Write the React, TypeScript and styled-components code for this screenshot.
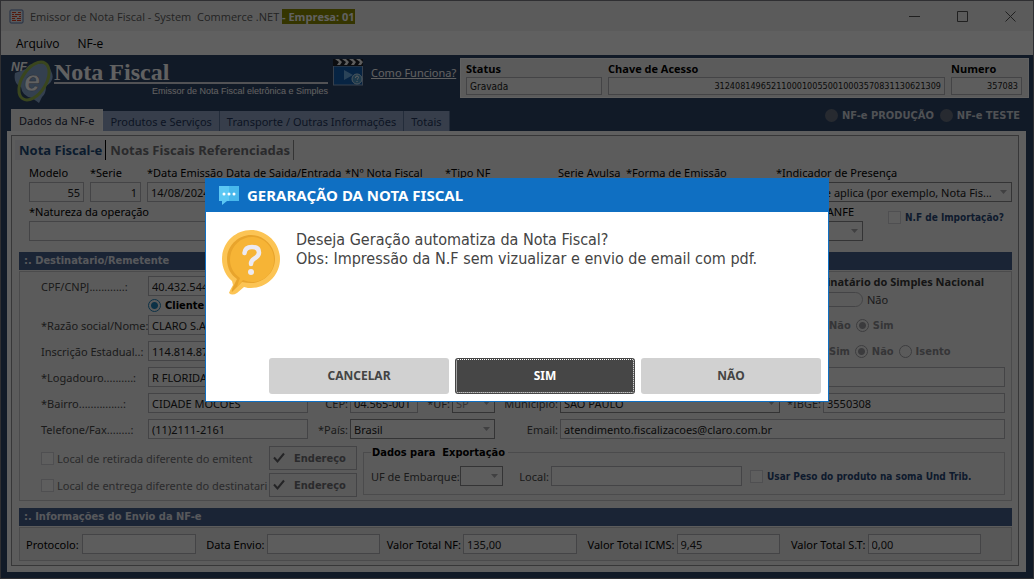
import React, { ReactNode } from "react";
import styled, { createGlobalStyle, css } from "styled-components";

const Global = createGlobalStyle`
  * { box-sizing: border-box; }
  body { margin: 0; background: #f0f0f0; }
  body, button, input, select { font-family: "Noto Sans", sans-serif; font-size: 11px; }
`;

const navy = "#2f4468";
const bar = "#445f8c";
const line = "#b4b4b8";
const heavy = `"DejaVu Sans Condensed", "Noto Sans", sans-serif`;

const Window = styled.div`
  min-height: 100vh;
  display: flex;
  flex-direction: column;
  border: 1px solid #7c7c84;
  background: #f0f0f0;
  color: #000;
`;

const TitleBar = styled.header`
  height: 30px;
  display: flex;
  align-items: center;
  gap: 6px;
  padding: 0 16px 0 8px;
  font-family: "Open Sans", "Noto Sans", sans-serif;
  color: #5c5c5c;
`;
const TitleText = styled.h1`
  margin: 0;
  flex: 1;
  font-size: 11px;
  font-weight: 400;
  white-space: pre;
`;
const Company = styled.mark`
  background: #8c8c00;
  color: #fff;
  font-weight: 700;
`;
const WindowButton = styled.button`
  width: 14px;
  height: 14px;
  padding: 0;
  border: 0;
  background: none;
  margin-left: 28px;
  display: grid;
  place-items: center;
`;

const MenuBar = styled.nav`
  height: 24px;
  display: flex;
  align-items: center;
  gap: 18px;
  padding-left: 15px;
  background: #fcfcfc;
`;
const MenuItem = styled.button`
  border: 0;
  padding: 0;
  background: none;
  font-family: "Open Sans", "Noto Sans", sans-serif;
  font-size: 12px;
`;

const Shell = styled.main`
  flex: 1;
  display: flex;
  flex-direction: column;
  background: ${navy};
  padding: 3px 7px 6px 6px;
`;
const Banner = styled.div`
  display: flex;
  align-items: flex-start;
  height: 51px;
  margin-right: -3px;
  padding-left: 4px;
`;
const Brand = styled.div`
  width: 274px;
  margin-right: 5px;
  color: #fff;
  display: flex;
  flex-direction: column;
`;
const BrandName = styled.div`
  font: bold 24px/28px "Liberation Serif", serif;
  border-bottom: 2px solid #d8d8e0;
  height: 26px;
`;
const BrandSub = styled.div`
  font: 9px/15px "Liberation Sans", sans-serif;
  text-align: right;
`;
const HelpLink = styled.a`
  margin: 7px 5px 0 7px;
  width: 84px;
  color: #fff;
  line-height: 16px;
  white-space: nowrap;
`;
const StatusPanel = styled.div`
  flex: 1;
  height: 40px;
  display: flex;
  gap: 6px;
  padding: 1px 6px 0 5px;
  background: #f0f0f0;
  border: 1px solid #fff;
`;

const TabRow = styled.div`
  display: flex;
  align-items: flex-end;
  height: 22px;
  padding-left: 4px;
`;
const Tab = styled.button<{ $active?: boolean }>`
  height: ${(p) => (p.$active ? 22 : 20)}px;
  padding: 0 ${(p) => (p.$active ? 8 : 7)}px;
  border: 0;
  border-right: 1px solid ${(p) => (p.$active ? "#f4f4f4" : "#5c7498")};
  background: ${(p) => (p.$active ? "#f0f0f0" : "#90a4c4")};
  color: ${(p) => (p.$active ? "#202840" : "#24365c")};
  white-space: nowrap;
`;
const EnvGroup = styled.div`
  margin: 0 6px 0 auto;
  height: 22px;
  display: flex;
  align-items: flex-start;
  gap: 6px;
  color: #d0d4dc;
  font-family: ${heavy};
  font-weight: 700;
`;

const Sheet = styled.section`
  flex: 1;
  display: flex;
  background: #fafafa;
  padding: 4px 7px 6px 4px;
`;
const Page = styled.div`
  flex: 1;
  min-width: 0;
  border: 1px solid #909094;
  padding: 4px 6px 3px 7px;
  background: #f2f2f2;
`;
const SubTabs = styled.div`
  display: flex;
  height: 20px;
  margin-left: -4px;
`;
const SubTab = styled.button<{ $active?: boolean }>`
  border: 0;
  border-right: 1px solid ${(p) => (p.$active ? "#000" : "#888")};
  padding: 0 3px 0 4px;
  background: ${(p) => (p.$active ? "#e6e8ec" : "none")};
  color: ${(p) => (p.$active ? "#204878" : "#707074")};
  font-size: 13px;
  font-weight: 700;
  white-space: nowrap;
`;

const control = css`
  height: 20px;
  width: 100%;
  min-width: 0;
  border: 1px solid ${line};
  background: #f4f4f4;
  color: #202020;
  padding: 0 3px;
`;
const Input = styled.input<{ $right?: boolean; $w?: number; $compact?: boolean; $small?: boolean }>`
  ${control}
  ${(p) => p.$right && "text-align: right;"}
  ${(p) => p.$compact && `height: 18px; font: ${p.$small ? 9 : 10}px ${heavy};`}
  ${(p) => p.$w && `width: ${p.$w}px; flex: none;`}
`;
const SelectFrame = styled.span<{ $w?: number }>`
  display: grid;
  align-items: center;
  ${(p) => (p.$w ? `width: ${p.$w}px; flex: none;` : "width: 100%; min-width: 0;")}
  > * { grid-area: 1 / 1; }
  > svg { justify-self: end; margin-right: 5px; pointer-events: none; }
`;
const NativeSelect = styled.select<{ $muted?: boolean }>`
  ${control}
  appearance: none;
  border-color: #88888c;
  ${(p) => p.$muted && "color: #8c8c90;"}
`;
function Select(p: { id: string; value?: string; w?: number; muted?: boolean }) {
  return (
    <SelectFrame $w={p.w}>
      <NativeSelect id={p.id} $muted={p.muted}>
        <option>{p.value}</option>
      </NativeSelect>
      <svg width="7" height="4" viewBox="0 0 7 4"><path d="M0 0h7L3.500 4z" fill="#a8a8ac" /></svg>
    </SelectFrame>
  );
}

const FieldRow = styled.div<{ $first?: boolean }>`
  display: flex;
  gap: 6px;
  padding: ${(p) => (p.$first ? 3 : 0)}px 0 0 10px;
`;
const FieldBox = styled.div<{ $w?: number }>`
  ${(p) => (p.$w ? `width: ${p.$w}px; flex: none;` : "flex: 1; min-width: 0;")}
  display: flex;
  flex-direction: column;
`;
const FieldLabel = styled.label<{ $compact?: boolean }>`
  height: 19px;
  line-height: 19px;
  white-space: nowrap;
  ${(p) => p.$compact && `height: 17px; font: 700 11px/18px "Open Sans", "Noto Sans", sans-serif;`}
`;
function Field(p: { id: string; label: string; w?: number; compact?: boolean; small?: boolean; right?: boolean; value?: string; children?: ReactNode }) {
  return (
    <FieldBox $w={p.w}>
      <FieldLabel htmlFor={p.id} $compact={p.compact}>{p.label}</FieldLabel>
      {p.children ?? <Input id={p.id} $right={p.right} $compact={p.compact} $small={p.small} defaultValue={p.value} />}
    </FieldBox>
  );
}

const SectionBar = styled.h2<{ $top: number }>`
  margin: ${(p) => p.$top}px 0 0;
  height: 18px;
  padding-left: 5px;
  background: ${bar};
  color: #e4e8f0;
  font: 700 11px/18px ${heavy};
`;
const Panel = styled.div`
  border: 1px solid #c4c4c8;
  margin-top: 1px;
  background: #f0f0f0;
`;
const Recipient = styled(Panel)`
  height: 230px;
  padding: 4px 6px 3px 21px;
  color: #484848;
`;
const Line = styled.div<{ $gap?: number; $h?: number }>`
  display: flex;
  align-items: center;
  height: ${(p) => p.$h ?? 20}px;
  margin-bottom: ${(p) => p.$gap ?? 6}px;
`;
const TopBlock = styled.div`
  display: flex;
  justify-content: space-between;
`;
const RowLabel = styled.label`
  width: 107px;
  flex: none;
  white-space: nowrap;
`;
const Inline = styled.label<{ $w: number; $right?: boolean }>`
  width: ${(p) => p.$w}px;
  flex: none;
  white-space: nowrap;
  ${(p) => p.$right && "text-align: right; padding-right: 2px;"}
`;
const Side = styled.div`
  margin-left: auto;
  width: 193px;
  display: flex;
  align-items: center;
  gap: 5px;
  color: #8c8c90;
  font-family: ${heavy};
  font-weight: 700;
`;
const SimplesBlock = styled.div`
  width: 203px;
  display: flex;
  flex-direction: column;
  gap: 4px;
`;
const SideTitle = styled.strong`
  font: 700 11px/12px "Open Sans", "Noto Sans", sans-serif;
  color: #383838;
  white-space: nowrap;
`;
const ToggleRow = styled.div`
  display: flex;
  align-items: center;
  gap: 4px;
  padding-left: 10px;
`;
const Toggle = styled.input`
  appearance: none;
  width: 51px;
  height: 15px;
  margin: 0;
  border: 1px solid #b4b4b8;
  border-radius: 8px;
`;
const Radio = styled.input<{ $tone?: string }>`
  appearance: none;
  flex: none;
  width: 13px;
  height: 13px;
  margin: 0;
  border: 1px solid ${(p) => p.$tone ?? "#a0a0a4"};
  border-radius: 50%;
  &:checked { background: radial-gradient(circle, ${(p) => p.$tone ?? "#9c9ca0"} 0 3px, transparent 4px); }
`;
const EnvRadio = styled(Radio)`
  border: 0;
  background: #67707f;
`;
const Choice = styled.label<{ $strong?: boolean }>`
  display: flex;
  align-items: center;
  gap: 4px;
  white-space: nowrap;
  ${(p) => p.$strong && `color: #000; font-weight: 700; font-family: ${heavy};`}
`;
const Check = styled.input`
  appearance: none;
  flex: none;
  width: 13px;
  height: 13px;
  margin: 0;
  border: 1px solid #d0d0d4;
  background: #f6f6f6;
`;
const Bottom = styled.div`
  display: flex;
  gap: 6px;
`;
const Places = styled.div`
  width: 316px;
  padding-top: 1px;
  display: flex;
  flex-direction: column;
  gap: 3px;
`;
const Place = styled.div`
  display: flex;
  align-items: center;
  height: 24px;
`;
const PlaceText = styled.label`
  margin-left: 3px;
  white-space: nowrap;
  color: #707074;
`;
const AddressButton = styled.button`
  width: 88px;
  height: 24px;
  margin-left: auto;
  border: 1px solid #b4b4b8;
  background: #ececec;
  color: #707074;
  font: 700 11px ${heavy};
  display: flex;
  align-items: center;
  gap: 9px;
  padding: 0 0 0 3px;
`;
const Export = styled.fieldset`
  flex: 1;
  min-width: 0;
  height: 50px;
  margin: 0;
  padding: 6px 6px 0 7px;
  border: 1px solid #c4c4c8;
  display: flex;
  legend { padding: 0 3px 0 1px; color: #000; font: 700 11px/15px ${heavy}; white-space: pre; }
`;
const Blue = styled.label`
  color: #284878;
  font: 700 10px ${heavy};
  white-space: nowrap;
  margin-left: 4px;
`;
const Totals = styled(Panel)`
  height: 34px;
  display: flex;
  align-items: center;
  padding: 0 30px 0 6px;
  background: #e8e8e8;
`;

const Backdrop = styled.div`
  position: fixed;
  inset: 0;
  display: grid;
  place-items: center;
  background: rgba(0, 0, 0, 0.62);
`;
const Dialog = styled.div`
  width: 624px;
  max-width: 100%;
  height: 224px;
  display: flex;
  flex-direction: column;
  background: #fff;
  border: 1px solid #0f6fc2;
  color: #444;
`;
const DialogTitle = styled.h2`
  margin: 0;
  height: 33px;
  display: flex;
  align-items: center;
  gap: 8px;
  padding-left: 13px;
  background: #0f6fc2;
  color: #fff;
  font: 700 15px/20px "Noto Sans", sans-serif;
`;
const DialogBody = styled.div`
  flex: 1;
  display: flex;
  gap: 15px;
  padding: 18px 15px 0 16px;
  font: 16px/19px ${heavy};
  p { margin: 0; }
  svg { flex: none; }
`;
const Actions = styled.div`
  display: flex;
  justify-content: flex-end;
  gap: 6px;
  padding: 0 7px 7px;
`;
const Action = styled.button<{ $primary?: boolean }>`
  width: 180px;
  height: 36px;
  border: 0;
  border-radius: 3px;
  background: ${(p) => (p.$primary ? "#464646" : "#d1d1d1")};
  color: ${(p) => (p.$primary ? "#fff" : "#444")};
  font: 700 12px "Noto Sans", sans-serif;
  ${(p) => p.$primary && "outline: 1px dotted #fff; outline-offset: -2px;"}
`;

const AppIcon = () => (
  <svg width="15" height="15" viewBox="0 0 15 15">
    <rect x="1" y="1" width="13" height="13" rx="1" fill="#e8ecf4" stroke="#5878b0" />
    <path d="M3 3.500h4M9 3.500h3M3 5.500h2M6 5.500h6M3 7.500h5M10 7.500h2M3 9.500h3M8 9.500h4M3 11.500h4M8 11.500h4" stroke="#e04020" />
  </svg>
);
const Logo = () => (
  <svg width="43" height="46" viewBox="0 -2 43 46">
    <path d="M4 13Q2 24 10 27Q11 36 21 38L28 43L31 37Q35 34 35 26Q45 20 40 11Q36 1 26 4Q18 3 15 9Z" fill="#88a8d0" />
    <ellipse cx="23" cy="21" rx="12" ry="21" transform="rotate(32 23 21)" fill="none" stroke="#98b850" strokeWidth="3" />
    <text x="0" y="11" fontFamily="Liberation Sans" fontWeight="700" fontStyle="italic" fontSize="12" fill="#fff">NF</text>
    <text x="13" y="31" fontFamily="Liberation Sans" fontWeight="700" fontStyle="italic" fontSize="29" fill="#fff" stroke="#60708c" strokeWidth="0.500">e</text>
  </svg>
);
const Clapper = () => (
  <svg width="31" height="28" viewBox="0 0 31 28">
    <rect x="0.500" y="8" width="29" height="19" fill="#1460b0" stroke="#90a8c8" />
    <path d="M0 1h30v7H0z" fill="#20242c" />
    <path d="M2 1h4l3 3-2 3H4l2-3zM9 1h4l3 3-2 3h-3l2-3zM16 1h4l3 3-2 3h-3l2-3zM23 1h4l3 3-2 3h-3l2-3z" fill="#f4f4f4" />
    <path d="M11 12l9 5-9 5z" fill="#70b0e8" />
    <circle cx="24" cy="21" r="5" fill="#5098c8" stroke="#c8e4f4" />
    <path d="M22.500 20q0-2 1.500-2t1.500 1.500q0 1-1.500 2M24 23v1" fill="none" stroke="#fff" />
  </svg>
);
const CheckMark = () => (
  <svg width="12" height="12" viewBox="0 0 12 12"><path d="M1 5.500L4.500 9.500L11 1.500" fill="none" stroke="#606064" strokeWidth="2" /></svg>
);
const ChatIcon = () => (
  <svg width="20" height="19" viewBox="0 0 20 19">
    <path d="M0 0h20v15H8l-5 4v-4H0z" fill="#5cc8f4" />
    <path d="M10 0h10v15H10z" fill="#48b8ec" />
    <circle cx="5" cy="8" r="1.500" fill="#fff" /><circle cx="10" cy="8" r="1.500" fill="#fff" /><circle cx="15" cy="8" r="1.500" fill="#fff" />
  </svg>
);
const QuestionIcon = () => (
  <svg width="59" height="65" viewBox="0 0 59 65">
    <path d="M29 0C45 0 58 13 58 29S45 58 29 58C27 58 25 58 22 57L15 63Q10 66 7 63Q8 60 11 55L10 51C4 46 0 38 0 29C0 13 13 0 29 0Z" fill="#fcc454" />
    <path d="M29 5C42 5 53 16 53 29S42 53 29 53Q25 53 20 52L10 62Q9 60 12 55L15 49C9 45 5 38 5 29C5 16 16 5 29 5Z" fill="#e8a42c" />
    <path d="M30 7C42 7 52 17 52 30S42 52 30 52Q26 52 21 50L15 57Q16 53 18 48C12 44 8 37 8 30C8 17 18 7 30 7Z" fill="#f6b436" />
    <path d="M22.500 23Q23 17 30 17Q37 17 37 22.500Q37 26 32.500 28.500Q29 30.500 29 34" fill="none" stroke="#eceaf2" strokeWidth="4.500" strokeLinecap="round" />
    <circle cx="29" cy="42" r="3" fill="#eceaf2" />
  </svg>
);

export default function App() {
  return (
    <>
      <Global />
      <Window>
        <TitleBar>
          <AppIcon />
          <TitleText>Emissor de Nota Fiscal - System  Commerce .NET <Company>- Empresa: 01</Company></TitleText>
          <WindowButton aria-label="Minimizar"><svg width="11" height="11"><path d="M0 5.500h11" stroke="#555" /></svg></WindowButton>
          <WindowButton aria-label="Maximizar"><svg width="11" height="11"><path d="M.5.500h10v10H.5z" fill="none" stroke="#555" /></svg></WindowButton>
          <WindowButton aria-label="Fechar"><svg width="11" height="11"><path d="M.5.500l10 10M10.500.500l-10 10" stroke="#555" /></svg></WindowButton>
        </TitleBar>
        <MenuBar>
          <MenuItem>Arquivo</MenuItem>
          <MenuItem>NF-e</MenuItem>
        </MenuBar>
        <Shell>
          <Banner>
            <Logo />
            <Brand>
              <BrandName>Nota Fiscal</BrandName>
              <BrandSub>Emissor de Nota Fiscal eletrônica e Simples</BrandSub>
            </Brand>
            <Clapper />
            <HelpLink href="#ajuda">Como Funciona?</HelpLink>
            <StatusPanel>
              <Field id="status" label="Status" w={136} compact value="Gravada" />
              <Field id="chave" label="Chave de Acesso" compact small right value="31240814965211000100550010003570831130621309" />
              <Field id="numero" label="Numero" w={71} compact small right value="357083" />
            </StatusPanel>
          </Banner>
          <TabRow>
            <Tab $active>Dados da NF-e</Tab>
            <Tab>Produtos e Serviços</Tab>
            <Tab>Transporte / Outras Informações</Tab>
            <Tab>Totais</Tab>
            <EnvGroup>
              <Choice><EnvRadio type="radio" name="ambiente" />NF-e PRODUÇÃO</Choice>
              <Choice><EnvRadio type="radio" name="ambiente" />NF-e TESTE</Choice>
            </EnvGroup>
          </TabRow>
          <Sheet>
            <Page>
              <SubTabs>
                <SubTab $active>Nota Fiscal-e</SubTab>
                <SubTab>Notas Fiscais Referenciadas</SubTab>
              </SubTabs>
              <FieldRow $first>
                <Field id="modelo" label="Modelo" w={55} right value="55" />
                <Field id="serie" label="*Serie" w={51} right value="1" />
                <Field id="emissao" label="*Data Emissão" w={73} value="14/08/2024" />
                <Field id="saida" label="Data de Saida/Entrada" w={113} />
                <Field id="nota" label="*Nº Nota Fiscal" w={94} />
                <Field id="tipo" label="*Tipo NF" w={107} />
                <Field id="avulsa" label="Serie Avulsa" w={62} />
                <Field id="forma" label="*Forma de Emissão" w={144} />
                <Field id="presenca" label="*Indicador de Presença">
                  <Select id="presenca" value="0 - Não se aplica (por exemplo, Nota Fis..." />
                </Field>
              </FieldRow>
              <FieldRow>
                <Field id="natureza" label="*Natureza da operação" />
                <Field id="danfe" label="DANFE" w={44}>
                  <Select id="danfe" />
                </Field>
                <FieldBox $w={143}>
                  <Line $gap={0} $h={30}>
                    <Inline as="span" $w={19} />
                    <Check type="checkbox" id="importacao" />
                    <Blue htmlFor="importacao">N.F de Importação?</Blue>
                  </Line>
                </FieldBox>
              </FieldRow>
              <SectionBar $top={11}>:. Destinatario/Remetente</SectionBar>
              <Recipient>
                <TopBlock>
                  <div>
                    <Line $gap={0}>
                      <RowLabel htmlFor="cpf">CPF/CNPJ............:</RowLabel>
                      <Input id="cpf" $w={160} defaultValue="40.432.544" />
                    </Line>
                    <Line $gap={0} $h={19}>
                      <RowLabel as="span" />
                      <Choice $strong><Radio $tone="#2080b8" type="radio" name="tipo" defaultChecked />Cliente</Choice>
                    </Line>
                  </div>
                  <SimplesBlock>
                    <SideTitle>Destinatário do Simples Nacional</SideTitle>
                    <ToggleRow><Toggle type="checkbox" id="simples" /><label htmlFor="simples">Não</label></ToggleRow>
                  </SimplesBlock>
                </TopBlock>
                <Line>
                  <RowLabel htmlFor="razao">*Razão social/Nome:</RowLabel>
                  <Input id="razao" $w={460} defaultValue="CLARO S.A" />
                  <Side>
                    <Choice><Radio type="radio" name="final" />Não</Choice>
                    <Choice><Radio type="radio" name="final" defaultChecked />Sim</Choice>
                  </Side>
                </Line>
                <Line>
                  <RowLabel htmlFor="ie">Inscrição Estadual..:</RowLabel>
                  <Input id="ie" $w={160} defaultValue="114.814.87" />
                  <Side>
                    <Choice><Radio type="radio" name="contrib" />Sim</Choice>
                    <Choice><Radio type="radio" name="contrib" defaultChecked />Não</Choice>
                    <Choice><Radio type="radio" name="contrib" />Isento</Choice>
                  </Side>
                </Line>
                <Line>
                  <RowLabel htmlFor="logadouro">*Logadouro..........:</RowLabel>
                  <Input id="logadouro" $w={460} defaultValue="R FLORIDA" />
                  <Inline as="span" $w={40} />
                  <Input aria-label="Complemento" />
                </Line>
                <Line>
                  <RowLabel htmlFor="bairro">*Bairro...............:</RowLabel>
                  <Input id="bairro" $w={160} defaultValue="CIDADE MOCOES" />
                  <Inline htmlFor="cep" $w={42} $right>CEP:</Inline>
                  <Input id="cep" $w={68} defaultValue="04.565-001" />
                  <Inline htmlFor="uf" $w={34} $right>*UF:</Inline>
                  <Select id="uf" w={43} value="SP" muted />
                  <Inline htmlFor="municipio" $w={65} $right>Município:</Inline>
                  <Select id="municipio" w={220} value="SAO PAULO" />
                  <Inline htmlFor="ibge" $w={43} $right>*IBGE:</Inline>
                  <Input id="ibge" defaultValue="3550308" />
                </Line>
                <Line>
                  <RowLabel htmlFor="fone">Telefone/Fax........:</RowLabel>
                  <Input id="fone" $w={160} defaultValue="(11)2111-2161" />
                  <Inline htmlFor="pais" $w={42} $right>*País:</Inline>
                  <Select id="pais" w={145} value="Brasil" />
                  <Inline htmlFor="email" $w={65} $right>Email:</Inline>
                  <Input id="email" defaultValue="atendimento.fiscalizacoes@claro.com.br" />
                </Line>
                <Bottom>
                  <Places>
                    <Place>
                      <Check type="checkbox" id="retirada" />
                      <PlaceText htmlFor="retirada">Local de retirada diferente do emitent</PlaceText>
                      <AddressButton><CheckMark />Endereço</AddressButton>
                    </Place>
                    <Place>
                      <Check type="checkbox" id="entrega" />
                      <PlaceText htmlFor="entrega">Local de entrega diferente do destinatari</PlaceText>
                      <AddressButton><CheckMark />Endereço</AddressButton>
                    </Place>
                  </Places>
                  <Export>
                    <legend>Dados para  Exportação</legend>
                    <Line>
                      <Inline htmlFor="ufe" $w={89}>UF de Embarque:</Inline>
                      <Select id="ufe" w={43} />
                      <Inline htmlFor="local" $w={48} $right>Local:</Inline>
                      <Input id="local" $w={191} />
                      <Inline as="span" $w={8} />
                      <Check type="checkbox" id="peso" />
                      <Blue htmlFor="peso">Usar Peso do produto na soma Und Trib.</Blue>
                    </Line>
                  </Export>
                </Bottom>
              </Recipient>
              <SectionBar $top={7}>:. Informações do Envio da NF-e</SectionBar>
              <Totals>
                <Inline htmlFor="protocolo" $w={56}>Protocolo:</Inline>
                <Input id="protocolo" />
                <Inline htmlFor="envio" $w={71} $right>Data Envio:</Inline>
                <Input id="envio" />
                <Inline htmlFor="vnf" $w={83} $right>Valor Total NF:</Inline>
                <Input id="vnf" defaultValue="135,00" />
                <Inline htmlFor="vicms" $w={100} $right>Valor Total ICMS:</Inline>
                <Input id="vicms" $w={103} defaultValue="9,45" />
                <Inline htmlFor="vst" $w={88} $right>Valor Total S.T:</Inline>
                <Input id="vst" defaultValue="0,00" />
              </Totals>
            </Page>
          </Sheet>
        </Shell>
      </Window>
      <Backdrop>
        <Dialog role="dialog" aria-modal="true" aria-labelledby="dialog-title">
          <DialogTitle id="dialog-title"><ChatIcon />GERARAÇÃO DA NOTA FISCAL</DialogTitle>
          <DialogBody>
            <QuestionIcon />
            <p>Deseja Geração automatiza da Nota Fiscal?<br />Obs: Impressão da N.F sem vizualizar e envio de email com pdf.</p>
          </DialogBody>
          <Actions>
            <Action>CANCELAR</Action>
            <Action $primary>SIM</Action>
            <Action>NÃO</Action>
          </Actions>
        </Dialog>
      </Backdrop>
    </>
  );
}
